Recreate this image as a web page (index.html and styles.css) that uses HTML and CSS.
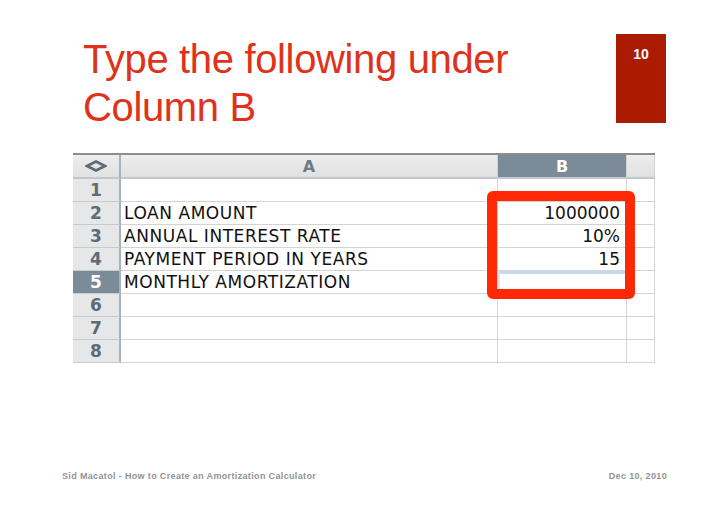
FILE: index.html
```html
<!DOCTYPE html>
<html>
<head lang="en">
    <meta charset="UTF-8">
    <title>Type the following under Column B</title>
    <link rel="stylesheet" href="styles.css">
</head>
<body>
<div id="slide">
    <div id="header">
        <h1 id="title">Type the following under<br>Column B</h1>
        <div id="pagenum">10</div>
    </div>
    <div id="sheet">
        <div class="corner">
            <svg width="22" height="12" viewBox="0 0 22 12">
                <polygon points="11,1.5 20,6 11,10.5 2,6" fill="none" stroke="#5d6b78" stroke-width="2.6" stroke-linejoin="miter"/>
            </svg>
        </div>
        <div class="colhead">A</div>
        <div class="colhead active">B</div>
        <div class="colhead"></div>

        <div class="rowhead">1</div><div class="cell"></div><div class="cell num"></div><div class="cell"></div>
        <div class="rowhead">2</div><div class="cell">LOAN AMOUNT</div><div class="cell num">1000000</div><div class="cell"></div>
        <div class="rowhead">3</div><div class="cell">ANNUAL INTEREST RATE</div><div class="cell num">10%</div><div class="cell"></div>
        <div class="rowhead">4</div><div class="cell">PAYMENT PERIOD IN YEARS</div><div class="cell num">15</div><div class="cell"></div>
        <div class="rowhead active">5</div><div class="cell">MONTHLY AMORTIZATION</div><div class="cell num selected"></div><div class="cell"></div>
        <div class="rowhead">6</div><div class="cell"></div><div class="cell num"></div><div class="cell"></div>
        <div class="rowhead">7</div><div class="cell"></div><div class="cell num"></div><div class="cell"></div>
        <div class="rowhead">8</div><div class="cell"></div><div class="cell num"></div><div class="cell"></div>

        <div id="highlight"></div>
    </div>
    <div id="footer">
        <span>Sid Macatol - How to Create an Amortization Calculator</span>
        <span>Dec 10, 2010</span>
    </div>
</div>
</body>
</html>
```

FILE: styles.css
```css
*{
    margin: 0;
    padding: 0;
    box-sizing: border-box;
}
body{
    background: #fff;
    font-family: "Liberation Sans", Arial, sans-serif;
}
#slide{
    width: 728px;
    height: 514px;
    position: relative;
    overflow: hidden;
}
#header{
    display: flex;
    justify-content: space-between;
    align-items: flex-start;
    padding: 34px 62px 0 83px;
    height: 153px;
}
#title{
    margin-top: 1px;
    font-weight: normal;
    font-size: 40px;
    line-height: 48px;
    color: #e0321a;
    letter-spacing: -0.35px;
}
#pagenum{
    width: 50px;
    height: 89px;
    background: #aa1b02;
    color: #fff;
    font-weight: bold;
    font-size: 14px;
    text-align: center;
    padding-top: 12px;
}
#sheet{
    position: relative;
    margin-left: 73px;
    width: 582px;
    display: grid;
    grid-template-columns: 48px 377px 129px 28px;
    grid-template-rows: 24px repeat(8, 23px);
    border-top: 2px solid #8e8e8e;
    font-family: "DejaVu Sans", Verdana, sans-serif;
}
.corner,
.colhead{
    background: linear-gradient(#ededed, #e1e1e1);
    border-bottom: 2px solid #c4c8cc;
    display: flex;
    align-items: center;
    justify-content: center;
    font-weight: bold;
    font-size: 16px;
    color: #6e7a84;
}
.corner{
    border-right: 2px solid #a9b1b9;
}
.colhead{
    border-right: 1px solid #d2d2d2;
}
.colhead.active{
    background: #7b8b98;
    color: #fff;
}
.rowhead{
    background: #e6e7e9;
    border-right: 2px solid #a9b1b9;
    border-bottom: 1px solid #c8cacc;
    text-align: center;
    font-weight: bold;
    font-size: 17px;
    line-height: 22px;
    color: #5e6a74;
}
.rowhead.active{
    background: #7b8b98;
    color: #fff;
}
.cell{
    border-bottom: 1px solid #d4d4d4;
    border-right: 1px solid #d4d4d4;
    font-size: 17px;
    line-height: 22px;
    letter-spacing: 0.55px;
    color: #111;
    padding-left: 3px;
    white-space: nowrap;
}
.cell.num{
    text-align: right;
    padding-right: 6px;
    letter-spacing: 0;
}
.cell.selected{
    border-top: 3px solid #c6daef;
    border-left: 2px solid #d6e4f3;
}
#highlight{
    position: absolute;
    left: 414px;
    top: 36px;
    width: 148px;
    height: 108px;
    border: 10px solid #ff2a05;
    border-radius: 6px;
}
#footer{
    position: absolute;
    left: 62px;
    right: 61px;
    top: 471px;
    display: flex;
    justify-content: space-between;
    font-size: 9px;
    font-weight: bold;
    letter-spacing: 0.35px;
    color: #939393;
}
```
